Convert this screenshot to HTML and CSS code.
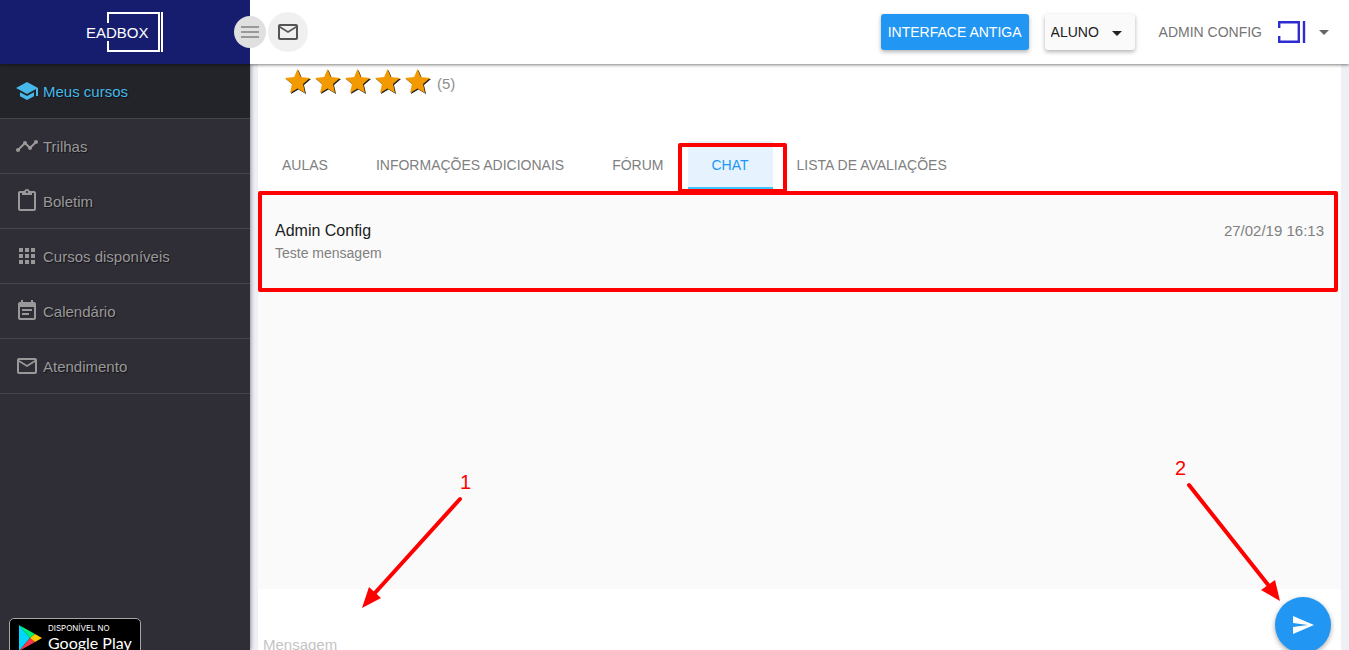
FILE: index.html
```html
<!DOCTYPE html>
<html lang="pt-BR">
<head>
    <meta charset="UTF-8">
    <meta name="viewport" content="width=device-width, initial-scale=1.0">
    <title>EADBOX - Chat</title>
    <link rel="stylesheet" href="styles.css">
</head>
<body>
    <header class="topbar">
        <a href="#" class="brand" aria-label="EADBOX">
            <svg width="78" height="42" viewBox="0 0 78 42">
                <path d="M22 12V2H73V40H22V30" fill="none" stroke="#fff" stroke-width="2"/>
                <path d="M76 1V41" stroke="#fff" stroke-width="2"/>
                <text x="0" y="27" class="brand-text">EADBOX</text>
            </svg>
        </a>
        <button type="button" class="menu-toggle" aria-label="Menu">
            <svg width="18" height="12" viewBox="0 0 18 12"><path d="M0 1H18M0 6H18M0 11H18" stroke="#999" stroke-width="2"/></svg>
        </button>
        <button type="button" class="mail-btn" aria-label="Mensagens">
            <svg width="24" height="24" viewBox="0 0 24 24" fill="#555"><path d="M20 4H4c-1.100 0-2 .9-2 2v12c0 1.100.9 2 2 2h16c1.100 0 2-.9 2-2V6c0-1.100-.9-2-2-2zm0 14H4V8l8 5 8-5v10zm-8-7L4 6h16l-8 5z"/></svg>
        </button>
        <div class="topbar-actions">
            <button type="button" class="btn-primary">INTERFACE ANTIGA</button>
            <div class="role">
                <select class="role-select" aria-label="Perfil">
                    <option>ALUNO</option>
                </select>
                <svg class="role-caret" width="10" height="5" viewBox="0 0 10 5"><path d="M0 0H10L5 5Z" fill="#212121"/></svg>
            </div>
            <button type="button" class="user-menu">
                <span class="user-name">ADMIN CONFIG</span>
                <svg width="28" height="24" viewBox="0 0 28 24"><path d="M1.200 8V2.200H20.800V21.800H1.200V16M26 1V23" fill="none" stroke="#2f2bd0" stroke-width="2.400"/></svg>
                <svg width="10" height="5" viewBox="0 0 10 5"><path d="M0 0H10L5 5Z" fill="#666"/></svg>
            </button>
        </div>
    </header>

    <div class="layout">
        <aside class="sidebar">
            <nav class="side-nav">
                <a href="#" class="side-link active">
                    <svg width="24" height="24" viewBox="0 0 24 24"><path d="M5 13.180v4L12 21l7-3.820v-4L12 17l-7-3.820zM12 3L1 9l11 6 9-4.910V17h2V9L12 3z"/></svg>
                    Meus cursos
                </a>
                <a href="#" class="side-link">
                    <svg width="24" height="24" viewBox="0 0 24 24"><path d="M23 8c0 1.100-.9 2-2 2-.18 0-.35-.02-.51-.07l-3.560 3.550c.05.16.07.34.07.52 0 1.100-.9 2-2 2s-2-.9-2-2c0-.18.02-.36.07-.52l-2.550-2.550c-.16.05-.34.07-.52.07s-.36-.02-.52-.07l-4.550 4.560c.05.16.07.33.07.51 0 1.100-.9 2-2 2s-2-.9-2-2 .9-2 2-2c.18 0 .35.02.51.07l4.560-4.550C8.020 9.360 8 9.180 8 9c0-1.100.9-2 2-2s2 .9 2 2c0 .18-.02.36-.07.52l2.550 2.550c.16-.05.34-.07.52-.07s.36.02.52.07l3.550-3.560C19.020 8.350 19 8.180 19 8c0-1.100.9-2 2-2s2 .9 2 2z"/></svg>
                    Trilhas
                </a>
                <a href="#" class="side-link">
                    <svg width="24" height="24" viewBox="0 0 24 24"><path d="M19 2h-4.180C14.400.84 13.300 0 12 0S9.600.84 9.180 2H5c-1.100 0-2 .9-2 2v16c0 1.100.9 2 2 2h14c1.100 0 2-.9 2-2V4c0-1.100-.9-2-2-2zm-7 0c.55 0 1 .45 1 1s-.45 1-1 1-1-.45-1-1 .45-1 1-1zm7 18H5V4h2v2h10V4h2v16z"/></svg>
                    Boletim
                </a>
                <a href="#" class="side-link">
                    <svg width="24" height="24" viewBox="0 0 24 24"><path d="M4 8h4V4H4v4zm6 12h4v-4h-4v4zm-6 0h4v-4H4v4zm0-6h4v-4H4v4zm6 0h4v-4h-4v4zm6-10v4h4V4h-4zm-6 4h4V4h-4v4zm6 6h4v-4h-4v4zm0 6h4v-4h-4v4z"/></svg>
                    Cursos disponíveis
                </a>
                <a href="#" class="side-link">
                    <svg width="24" height="24" viewBox="0 0 24 24"><path d="M17 10H7v2h10v-2zm2-7h-1V1h-2v2H8V1H6v2H5c-1.110 0-1.990.9-1.990 2L3 19c0 1.100.89 2 2 2h14c1.100 0 2-.9 2-2V5c0-1.100-.9-2-2-2zm0 16H5V8h14v11zm-5-5H7v2h7v-2z"/></svg>
                    Calendário
                </a>
                <a href="#" class="side-link">
                    <svg width="24" height="24" viewBox="0 0 24 24"><path d="M20 4H4c-1.100 0-2 .9-2 2v12c0 1.100.9 2 2 2h16c1.100 0 2-.9 2-2V6c0-1.100-.9-2-2-2zm0 14H4V8l8 5 8-5v10zm-8-7L4 6h16l-8 5z"/></svg>
                    Atendimento
                </a>
            </nav>
            <div class="side-footer">
                <a href="#" class="play-badge">
                    <svg width="24" height="26" viewBox="0 0 24 26">
                        <path d="M1 0L12 13L1 26Z" fill="#00d7fe"/>
                        <path d="M1 0L17 9L12 13Z" fill="#00f076"/>
                        <path d="M1 26L17 17L12 13Z" fill="#f9374a"/>
                        <path d="M17 9L24 13L17 17L12 13Z" fill="#ffc900"/>
                    </svg>
                    <span class="play-text">
                        <small>DISPONÍVEL NO</small>
                        <strong>Google Play</strong>
                    </span>
                </a>
            </div>
        </aside>

        <main class="content">
            <section class="panel">
                <div class="rating">
                    <svg class="star" width="26" height="26" viewBox="0 0 26 26"><path d="M12.500 0L15.800 8L25 9L18 15L20 24L12.500 19.500L5 24L7 15L0 9L9.200 8Z"/></svg>
                    <svg class="star" width="26" height="26" viewBox="0 0 26 26"><path d="M12.500 0L15.800 8L25 9L18 15L20 24L12.500 19.500L5 24L7 15L0 9L9.200 8Z"/></svg>
                    <svg class="star" width="26" height="26" viewBox="0 0 26 26"><path d="M12.500 0L15.800 8L25 9L18 15L20 24L12.500 19.500L5 24L7 15L0 9L9.200 8Z"/></svg>
                    <svg class="star" width="26" height="26" viewBox="0 0 26 26"><path d="M12.500 0L15.800 8L25 9L18 15L20 24L12.500 19.500L5 24L7 15L0 9L9.200 8Z"/></svg>
                    <svg class="star" width="26" height="26" viewBox="0 0 26 26"><path d="M12.500 0L15.800 8L25 9L18 15L20 24L12.500 19.500L5 24L7 15L0 9L9.200 8Z"/></svg>
                    <span class="rating-count">(5)</span>
                </div>

                <nav class="tabs">
                    <a href="#" class="tab">AULAS</a>
                    <a href="#" class="tab">INFORMAÇÕES ADICIONAIS</a>
                    <a href="#" class="tab">FÓRUM</a>
                    <a href="#" class="tab active">CHAT<span class="mark mark-tab"></span></a>
                    <a href="#" class="tab">LISTA DE AVALIAÇÕES</a>
                </nav>

                <div class="chat">
                    <article class="message">
                        <div>
                            <h3 class="message-author">Admin Config</h3>
                            <p class="message-text">Teste mensagem</p>
                        </div>
                        <time class="message-date">27/02/19 16:13</time>
                        <span class="mark mark-message"></span>
                    </article>

                    <div class="step step-one">
                        <span class="step-number">1</span>
                        <svg width="102" height="114" viewBox="0 0 102 114">
                            <path d="M100 4L14 99" stroke="#f00" stroke-width="4" stroke-linecap="round"/>
                            <path d="M2 113L9 92L21 103Z" fill="#f00"/>
                        </svg>
                    </div>
                    <div class="step step-two">
                        <span class="step-number">2</span>
                        <svg width="96" height="120" viewBox="0 0 96 120">
                            <path d="M4 4L84 105" stroke="#f00" stroke-width="4" stroke-linecap="round"/>
                            <path d="M95 120L76 109L90 99Z" fill="#f00"/>
                        </svg>
                    </div>
                </div>

                <form class="compose">
                    <input type="text" class="compose-input" placeholder="Mensagem" aria-label="Mensagem">
                    <button type="submit" class="send-btn" aria-label="Enviar">
                        <svg width="24" height="24" viewBox="0 0 24 24" fill="#fff"><path d="M2.010 21L23 12 2.010 3 2 10l15 2-15 2z"/></svg>
                    </button>
                </form>
            </section>
        </main>
    </div>
</body>
</html>
```
FILE: styles.css
```css
* {
    margin: 0;
    padding: 0;
    box-sizing: border-box;
}

body {
    font-family: "Liberation Sans", Arial, sans-serif;
    font-size: 15px;
    background: #eff0f6;
    height: 100vh;
    display: flex;
    flex-direction: column;
    overflow: hidden;
}

a {
    color: inherit;
    text-decoration: none;
}

button,
select,
input {
    font: inherit;
    border: none;
    background: none;
}

button {
    cursor: pointer;
}

svg {
    display: block;
    flex-shrink: 0;
}

/* Top bar */
.topbar {
    position: relative;
    z-index: 2;
    display: flex;
    align-items: center;
    height: 64px;
    flex-shrink: 0;
    background: #fff;
    box-shadow: 0 1px 3px rgba(0, 0, 0, 0.5);
}

.brand {
    display: flex;
    align-items: center;
    justify-content: center;
    width: 250px;
    height: 64px;
    background: #161d6f;
}

.brand-text {
    font-size: 15px;
    fill: #fff;
}

.menu-toggle,
.mail-btn {
    display: flex;
    align-items: center;
    justify-content: center;
    border-radius: 50%;
}

.menu-toggle {
    width: 32px;
    height: 32px;
    margin-left: -16px;
    background: #e0e0e0;
}

.mail-btn {
    width: 40px;
    height: 40px;
    margin-left: 2px;
    background: #f0f0f0;
}

.topbar-actions {
    display: flex;
    align-items: center;
    gap: 16px;
    margin-left: auto;
    padding-right: 20px;
    font-size: 14px;
}

.btn-primary {
    height: 36px;
    padding: 0 7px;
    border-radius: 3px;
    background: #2196f3;
    color: #fff;
    box-shadow: 0 2px 4px rgba(0, 0, 0, 0.3);
}

.role {
    position: relative;
}

.role-select {
    appearance: none;
    width: 90px;
    height: 36px;
    padding: 0 6px;
    border-radius: 3px;
    background: #fafafa;
    color: #212121;
    box-shadow: 0 2px 4px rgba(0, 0, 0, 0.3);
}

.role-caret {
    position: absolute;
    top: 17px;
    right: 13px;
    pointer-events: none;
}

.user-menu {
    display: flex;
    align-items: center;
    gap: 13px;
    padding-left: 8px;
    color: #757575;
}

.user-name {
    margin-right: 3px;
}

/* Sidebar */
.layout {
    display: flex;
    flex: 1;
    min-height: 0;
}

.sidebar {
    position: relative;
    z-index: 1;
    display: flex;
    flex-direction: column;
    justify-content: space-between;
    width: 250px;
    flex-shrink: 0;
    background: #2f2e37;
    box-shadow: 1px 0 4px rgba(0, 0, 0, 0.4);
}

.side-link {
    display: flex;
    align-items: center;
    gap: 4px;
    height: 55px;
    padding-left: 15px;
    border-bottom: 1px solid #45444e;
    color: #999;
    fill: #999;
    text-shadow: 1px 1px 1px rgba(0, 0, 0, 0.6);
}

.side-link.active {
    background: #232429;
    color: #46b8ea;
    fill: #46b8ea;
}

.side-footer {
    height: 32px;
    padding-left: 9px;
}

.play-badge {
    display: flex;
    gap: 6px;
    width: 132px;
    height: 40px;
    padding: 4px 8px;
    border: 1px solid #a6a6a6;
    border-radius: 5px;
    background: #000;
    color: #fff;
}

.play-badge svg {
    margin-top: 2px;
}

.play-text small,
.play-text strong {
    display: block;
    white-space: nowrap;
}

.play-text small {
    font-family: Inter, sans-serif;
    font-size: 8px;
    line-height: 10px;
}

.play-text strong {
    font-family: Lato, sans-serif;
    font-size: 16px;
    font-weight: normal;
    line-height: 20px;
}

/* Course panel */
.content {
    flex: 1;
    min-width: 0;
    padding: 0 8px;
}

.panel {
    background: #fff;
}

.rating {
    display: flex;
    align-items: flex-start;
    gap: 4px;
    height: 77px;
    padding: 5px 27px;
}

.star {
    fill: #f39a00;
    filter: drop-shadow(1px 1px 0 #222);
}

.rating-count {
    margin-left: 2px;
    line-height: 30px;
    color: #8e8e8e;
}

.tabs {
    display: flex;
    font-size: 14px;
    color: #808080;
}

.tab {
    position: relative;
    height: 48px;
    padding: 0 24px;
    line-height: 48px;
}

.tab.active {
    background: #e6f3fe;
    color: #2196f3;
    border-bottom: 2px solid #40c4ff;
}

/* Red highlights and numbered steps */
.mark {
    position: absolute;
    z-index: 1;
    border: 4px solid #f00;
    border-radius: 2px;
    pointer-events: none;
}

.mark-tab {
    top: 2px;
    bottom: -6px;
    left: -10px;
    right: -14px;
}

.mark-message {
    top: 0;
    bottom: 0;
    left: 0;
    right: 3px;
}

.step {
    position: absolute;
    z-index: 1;
    display: flex;
    flex-direction: column;
    gap: 1px;
    pointer-events: none;
}

.step-one {
    top: 279px;
    left: 102px;
    align-items: flex-end;
}

.step-two {
    top: 265px;
    right: 60px;
    align-items: flex-start;
}

.step-number {
    font-size: 20px;
    line-height: 24px;
    color: #f00;
}

.step-one .step-number {
    margin-right: -9px;
}

.step-two .step-number {
    margin-left: -10px;
}

/* Chat */
.chat {
    position: relative;
    height: 400px;
    background: #fafafa;
    border-top: 2px solid #fff;
}

.message {
    position: relative;
    display: flex;
    justify-content: space-between;
    height: 101px;
    padding: 28px 17px;
}

.message-author {
    font-size: 16px;
    font-weight: normal;
    line-height: 24px;
    color: #212121;
}

.message-text {
    font-size: 14px;
    line-height: 20px;
    color: #808080;
}

.message-date {
    line-height: 24px;
    color: #808080;
}

.compose {
    display: flex;
    align-items: flex-start;
    padding: 8px 10px 8px 5px;
}

.compose-input {
    flex: 1;
    height: 30px;
    margin-top: 32px;
    color: #212121;
    outline: none;
}

.compose-input::placeholder {
    color: #c4c4c4;
}

.send-btn {
    display: flex;
    align-items: center;
    justify-content: center;
    width: 56px;
    height: 56px;
    border-radius: 50%;
    background: #2196f3;
    box-shadow: 0 2px 5px rgba(0, 0, 0, 0.35);
}
```
